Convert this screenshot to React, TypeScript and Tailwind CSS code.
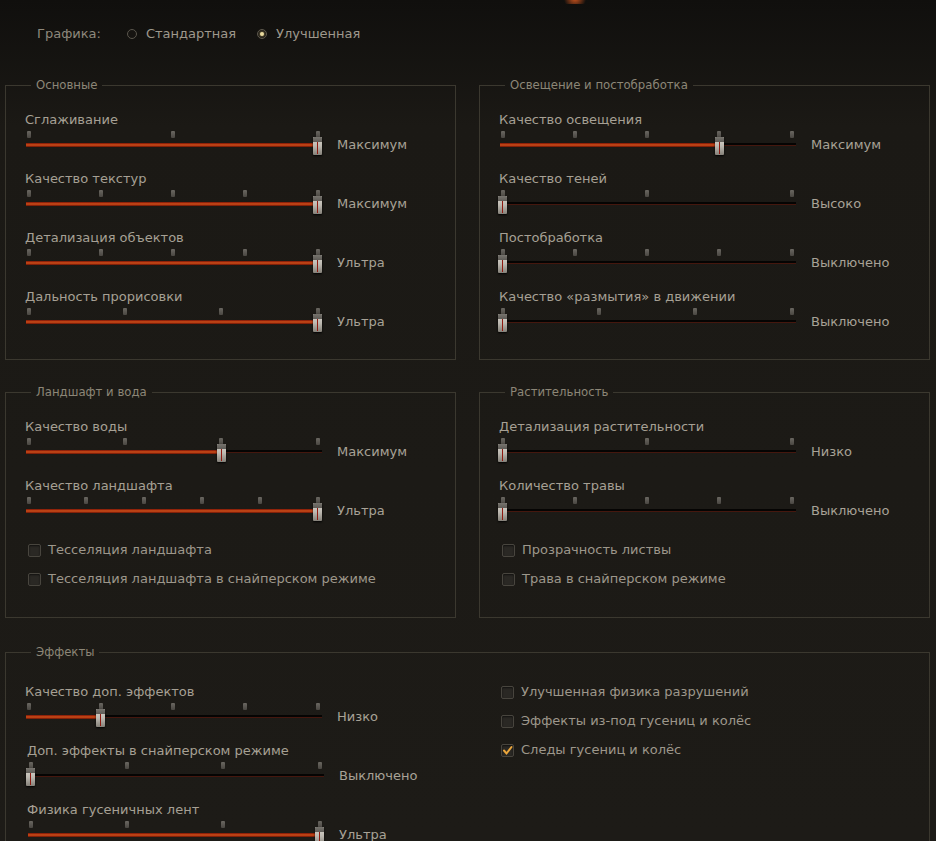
import React from 'react'

type SliderRow = {
  label: string
  steps: number
  value: number
  text: string
  shift?: boolean
}

type Panel = {
  title: string
  sliders: SliderRow[]
  checks?: { label: string; checked?: boolean }[]
}

const TRACK_W = 296
const TICK_SPAN = 289

const basic: Panel = {
  title: 'Основные',
  sliders: [
    { label: 'Сглаживание', steps: 3, value: 2, text: 'Максимум' },
    { label: 'Качество текстур', steps: 5, value: 4, text: 'Максимум' },
    { label: 'Детализация объектов', steps: 5, value: 4, text: 'Ультра' },
    { label: 'Дальность прорисовки', steps: 4, value: 3, text: 'Ультра' },
  ],
}

const lighting: Panel = {
  title: 'Освещение и постобработка',
  sliders: [
    { label: 'Качество освещения', steps: 5, value: 3, text: 'Максимум' },
    { label: 'Качество теней', steps: 3, value: 0, text: 'Высоко' },
    { label: 'Постобработка', steps: 5, value: 0, text: 'Выключено' },
    { label: 'Качество «размытия» в движении', steps: 4, value: 0, text: 'Выключено' },
  ],
}

const terrain: Panel = {
  title: 'Ландшафт и вода',
  sliders: [
    { label: 'Качество воды', steps: 4, value: 2, text: 'Максимум' },
    { label: 'Качество ландшафта', steps: 6, value: 5, text: 'Ультра' },
  ],
  checks: [
    { label: 'Тесселяция ландшафта' },
    { label: 'Тесселяция ландшафта в снайперском режиме' },
  ],
}

const foliage: Panel = {
  title: 'Растительность',
  sliders: [
    { label: 'Детализация растительности', steps: 3, value: 0, text: 'Низко' },
    { label: 'Количество травы', steps: 5, value: 0, text: 'Выключено' },
  ],
  checks: [{ label: 'Прозрачность листвы' }, { label: 'Трава в снайперском режиме' }],
}

const effectSliders: SliderRow[] = [
  { label: 'Качество доп. эффектов', steps: 5, value: 1, text: 'Низко' },
  { label: 'Доп. эффекты в снайперском режиме', steps: 4, value: 0, text: 'Выключено', shift: true },
  { label: 'Физика гусеничных лент', steps: 4, value: 3, text: 'Ультра', shift: true },
]

const effectChecks = [
  { label: 'Улучшенная физика разрушений' },
  { label: 'Эффекты из-под гусениц и колёс' },
  { label: 'Следы гусениц и колёс', checked: true },
]

const body = "font-['DejaVu_Sans','Verdana',sans-serif] text-[13px] leading-[16px]"

function Slider({ row }: { row: SliderRow }) {
  const centers = Array.from({ length: row.steps }, (_, i) => 2.5 + (i * TICK_SPAN) / (row.steps - 1))
  const pos = centers[row.value]
  return (
    <div className={`flex flex-col ${row.shift ? 'ml-[2px]' : ''}`}>
      <div className="text-[#a6a094] -ml-[1px]">{row.label}</div>
      <div className="flex">
        <div className="relative h-[28px]" style={{ width: TRACK_W }}>
          {centers.map((c, i) => (
            <div
              key={i}
              className="absolute top-[3px] h-[7px] w-[4px] rounded-[1px] bg-gradient-to-b from-[#6a6761] to-[#4a4742]"
              style={{ left: c - 2 }}
            />
          ))}
          {/* empty track */}
          <div className="absolute left-0 right-0 top-[15px] h-[3px] bg-[#050403] border-b border-[#45170e]" />
          {/* filled part */}
          <div
            className="absolute left-0 top-[15px] h-[4px] bg-gradient-to-b from-[#7a1206] via-[#d2501a] to-[#6a1005]"
            style={{ width: pos }}
          />
          {/* thumb */}
          <div
            className="absolute top-[9px] h-[18px] w-[9px] overflow-hidden rounded-[1px] shadow-[0_1px_2px_rgba(0,0,0,0.9)] bg-gradient-to-b from-[#d9d5cd] via-[#bdb9b1] to-[#858179]"
            style={{ left: pos - 4.5 }}
          >
            <div className="absolute left-0 right-0 top-0 h-[5px] bg-gradient-to-b from-[#77746e] to-[#5e5b56]" />
            <div className="absolute left-[4px] top-[5px] bottom-[1px] w-[1px] bg-[#8e1a10]" />
          </div>
        </div>
        <div className="ml-[15px] mt-[9px] text-[#a8a296]">{row.text}</div>
      </div>
    </div>
  )
}

function Check({ label, checked }: { label: string; checked?: boolean }) {
  return (
    <div className="flex items-center">
      <div className="ml-[2px] flex h-[13px] w-[13px] items-center justify-center rounded-[2px] border border-[#48453e] bg-[#2a2824] shadow-[inset_0_1px_2px_rgba(0,0,0,0.6)]">
        {checked && (
          <svg width="11" height="11" viewBox="0 0 11 11">
            <path d="M2 5.5 L4.5 8.5 L9.5 2" fill="none" stroke="#eba63c" strokeWidth="2" strokeLinecap="round" />
          </svg>
        )}
      </div>
      <span className="ml-[7px] text-[#9d978b]">{label}</span>
    </div>
  )
}

function Legend({ title }: { title: string }) {
  return (
    <legend className="ml-[5px] px-[5px] font-['DejaVu_Sans_Condensed','DejaVu_Sans',sans-serif] font-stretch-condensed text-[13px] leading-[14px] text-[#8c8677]">
      {title}
    </legend>
  )
}

function Box({ panel, height }: { panel: Panel; height: string }) {
  return (
    <fieldset className={`${height} border border-[#3b382f] px-[20px]`}>
      <Legend title={panel.title} />
      <div className="flex flex-col gap-[15px] pt-[20px]">
        {panel.sliders.map((s) => (
          <Slider key={s.label} row={s} />
        ))}
      </div>
      {panel.checks && (
        <div className="mt-[20px] flex flex-col gap-[13px]">
          {panel.checks.map((c) => (
            <Check key={c.label} label={c.label} checked={c.checked} />
          ))}
        </div>
      )}
    </fieldset>
  )
}

function Radio({ label, on }: { label: string; on?: boolean }) {
  return (
    <div className="flex items-center">
      <div className="flex h-[10px] w-[10px] items-center justify-center rounded-full border border-[#5a564d] bg-[#161411]">
        {on && <div className="h-[4px] w-[4px] rounded-full bg-[#eadca0] shadow-[0_0_3px_#d8c27a]" />}
      </div>
      <span className="ml-[9px] text-[#9e988c]">{label}</span>
    </div>
  )
}

export default function App() {
  return (
    <div
      className={`relative h-[841px] w-[936px] overflow-hidden bg-gradient-to-b from-[#100f0d] via-[#1b1915] via-15% to-[#1d1b17] ${body}`}
    >
      {/* tab glow peeking in at the top */}
      <div className="absolute left-[560px] top-[-8px] h-[12px] w-[30px] rounded-full bg-[radial-gradient(circle,#d2561e,transparent_70%)]" />

      <div className="flex items-center pl-[37px] pt-[26px]">
        <span className="text-[#8e887c]">Графика:</span>
        <div className="ml-[26px]">
          <Radio label="Стандартная" />
        </div>
        <div className="ml-[21px]">
          <Radio label="Улучшенная" on />
        </div>
      </div>

      <div className="mt-[36px] grid grid-cols-[451px_451px] gap-x-[23px] gap-y-[25px] px-[5px]">
        <Box panel={basic} height="h-[282px]" />
        <Box panel={lighting} height="h-[282px]" />
        <Box panel={terrain} height="h-[233px]" />
        <Box panel={foliage} height="h-[233px]" />
        <fieldset className="col-span-2 mt-[2px] h-[260px] border border-[#3b382f] pl-[20px]">
          <Legend title="Эффекты" />
          <div className="grid grid-cols-[473px_1fr] pt-[25px]">
            <div className="flex flex-col gap-[15px]">
              {effectSliders.map((s) => (
                <Slider key={s.label} row={s} />
              ))}
            </div>
            <div className="flex flex-col gap-[13px]">
              {effectChecks.map((c) => (
                <Check key={c.label} label={c.label} checked={c.checked} />
              ))}
            </div>
          </div>
        </fieldset>
      </div>
    </div>
  )
}
